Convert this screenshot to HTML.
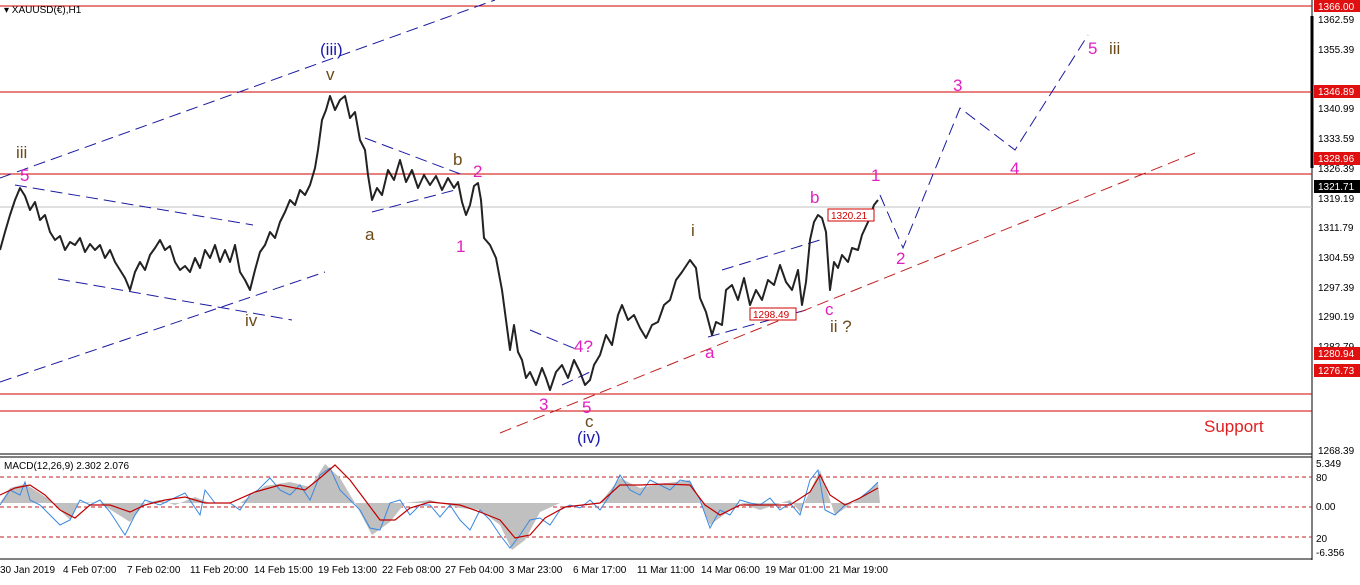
<!DOCTYPE html>
<html><head><meta charset="utf-8"><style>
body{margin:0;background:#fff;width:1360px;height:580px;overflow:hidden;font-family:"Liberation Sans",sans-serif}
svg text{font-family:"Liberation Sans",sans-serif}
</style></head><body>
<svg width="1360" height="580" viewBox="0 0 1360 580" xmlns="http://www.w3.org/2000/svg">
<rect width="1360" height="580" fill="#fff"/>
<line x1="1312" y1="0" x2="1312" y2="560" stroke="#000"/>
<line x1="0" y1="454" x2="1312" y2="454" stroke="#000" stroke-width="1"/>
<line x1="0" y1="457" x2="1312" y2="457" stroke="#000" stroke-width="1"/>
<line x1="0" y1="559" x2="1312" y2="559" stroke="#000"/>
<line x1="1312" y1="16" x2="1312" y2="168" stroke="#000" stroke-width="3"/>
<g stroke="#d00000" stroke-width="1">
<line x1="0" y1="6" x2="1312" y2="6"/>
<line x1="0" y1="92" x2="1312" y2="92"/>
<line x1="0" y1="174" x2="1312" y2="174"/>
<line x1="0" y1="394" x2="1312" y2="394"/>
<line x1="0" y1="411" x2="1312" y2="411"/>
</g>
<line x1="0" y1="207" x2="1312" y2="207" stroke="#c0c0c0"/>
<g stroke="#1a1aa0" stroke-width="1" stroke-dasharray="12,6" fill="none">
<line x1="0" y1="178" x2="495" y2="0"/>
<line x1="0" y1="382" x2="325" y2="272"/>
<line x1="15" y1="185" x2="253" y2="225"/>
<line x1="58" y1="279" x2="292" y2="320"/>
<line x1="365" y1="138" x2="463" y2="175"/>
<line x1="372" y1="212" x2="455" y2="190"/>
<line x1="530" y1="330" x2="578" y2="350"/>
<line x1="562" y1="385" x2="590" y2="372"/>
<line x1="722" y1="270" x2="820" y2="240"/>
<line x1="708" y1="337" x2="806" y2="310"/>
<polyline points="880,195 903,248 960,108 1015,150 1088,35"/>
</g>
<line x1="500" y1="433" x2="1195" y2="153" stroke="#c02020" stroke-dasharray="12,6"/>
<polyline fill="none" stroke="#222" stroke-width="2" stroke-linejoin="round" points="0,250 5,232 10,215 15,200 20,188 25,196 30,210 35,202 40,220 45,215 50,232 55,240 60,236 65,250 70,242 75,245 80,238 85,252 90,244 95,250 100,245 105,258 110,250 115,262 120,270 125,278 130,290 135,272 140,262 145,270 150,255 155,248 160,240 165,250 170,246 175,262 180,270 185,266 190,272 195,258 200,268 205,250 210,258 215,245 220,262 225,250 230,262 235,245 240,272 245,280 250,290 255,270 260,252 265,245 270,232 275,238 280,222 285,212 290,200 295,205 300,190 305,195 310,185 315,168 318,150 322,120 326,110 330,96 335,110 340,100 345,96 350,118 355,112 360,140 365,150 368,175 372,200 377,188 382,195 388,170 394,180 400,160 406,182 412,170 418,188 424,175 430,185 436,176 442,190 448,178 454,188 458,182 462,202 466,215 470,205 474,186 478,183 481,200 484,238 490,245 496,258 502,290 506,320 510,350 514,325 518,352 522,360 526,378 530,372 536,385 542,368 546,378 550,390 556,372 562,365 568,378 574,360 580,372 585,385 590,380 594,365 600,355 606,335 612,345 618,315 622,305 628,320 634,315 640,328 646,338 652,325 658,322 664,305 670,300 676,280 682,272 690,260 696,268 700,298 706,312 712,335 716,322 722,325 726,290 732,285 738,300 744,278 750,305 756,290 762,300 768,280 774,285 780,265 786,282 792,290 798,270 802,305 806,282 810,240 814,222 818,215 822,218 826,232 830,290 834,262 838,268 842,255 848,262 852,248 858,250 862,235 868,222 874,205 878,200"/>
<g font-size="17">
<text x="320" y="55" fill="#1a1ab0">(iii)</text>
<text x="577" y="443" fill="#1a1ab0">(iv)</text>
<text x="16" y="158" fill="#6b4a1a">iii</text>
<text x="326" y="80" fill="#6b4a1a">v</text>
<text x="245" y="326" fill="#6b4a1a">iv</text>
<text x="365" y="240" fill="#6b4a1a">a</text>
<text x="453" y="165" fill="#6b4a1a">b</text>
<text x="585" y="427" fill="#6b4a1a">c</text>
<text x="691" y="236" fill="#6b4a1a">i</text>
<text x="830" y="332" fill="#6b4a1a">ii ?</text>
<text x="1109" y="54" fill="#6b4a1a">iii</text>
<text x="20" y="181" fill="#e020c0">5</text>
<text x="473" y="177" fill="#e020c0">2</text>
<text x="456" y="252" fill="#e020c0">1</text>
<text x="539" y="410" fill="#e020c0">3</text>
<text x="582" y="413" fill="#e020c0">5</text>
<text x="574" y="352" fill="#e020c0">4?</text>
<text x="705" y="358" fill="#e020c0">a</text>
<text x="810" y="203" fill="#e020c0">b</text>
<text x="825" y="315" fill="#e020c0">c</text>
<text x="871" y="181" fill="#e020c0">1</text>
<text x="896" y="264" fill="#e020c0">2</text>
<text x="953" y="91" fill="#e020c0">3</text>
<text x="1010" y="174" fill="#e020c0">4</text>
<text x="1088" y="54" fill="#e020c0">5</text>
<text x="1204" y="432" fill="#e02020">Support</text>
</g>
<text x="4" y="13" font-size="10" fill="#000">▾ XAUUSD(€),H1</text>
<rect x="828" y="209" width="46" height="12" fill="#fff" stroke="#d00000"/>
<text x="831" y="219" font-size="10" fill="#d00000">1320.21</text>
<rect x="750" y="308" width="46" height="12" fill="#fff" stroke="#d00000"/>
<text x="753" y="318" font-size="10" fill="#d00000">1298.49</text>
<g font-size="10" fill="#000">
<text x="1318" y="23">1362.59</text>
<text x="1318" y="53">1355.39</text>
<text x="1318" y="112">1340.99</text>
<text x="1318" y="142">1333.59</text>
<text x="1318" y="172">1326.39</text>
<text x="1318" y="202">1319.19</text>
<text x="1318" y="231">1311.79</text>
<text x="1318" y="261">1304.59</text>
<text x="1318" y="291">1297.39</text>
<text x="1318" y="320">1290.19</text>
<text x="1318" y="350">1282.79</text>
<text x="1318" y="454">1268.39</text>
<text x="1316" y="467">5.349</text>
<text x="1316" y="481">80</text>
<text x="1316" y="510">0.00</text>
<text x="1316" y="542">20</text>
<text x="1316" y="556">-6.356</text>
</g>
<g font-size="10" fill="#fff">
<rect x="1314" y="0" width="46" height="12" fill="#e01010"/><text x="1318" y="10">1366.00</text>
<rect x="1314" y="85" width="46" height="13" fill="#e01010"/><text x="1318" y="95">1346.89</text>
<rect x="1314" y="152" width="46" height="13" fill="#e01010"/><text x="1318" y="162">1328.96</text>
<rect x="1314" y="180" width="46" height="13" fill="#000"/><text x="1318" y="190">1321.71</text>
<rect x="1314" y="347" width="46" height="13" fill="#e01010"/><text x="1318" y="357">1280.94</text>
<rect x="1314" y="364" width="46" height="13" fill="#e01010"/><text x="1318" y="374">1276.73</text>
</g>
<g stroke="#c02020" stroke-dasharray="4,3"><line x1="0" y1="477" x2="1312" y2="477"/><line x1="0" y1="507" x2="1312" y2="507"/><line x1="0" y1="537" x2="1312" y2="537"/></g>
<polygon fill="#c0c0c0" points="0,503 10,488 25,484 35,490 50,500 62,512 70,520 80,502 100,503 130,522 145,503 160,500 175,505 195,497 210,503 240,503 265,486 290,482 310,487 325,464 340,478 355,503 372,535 390,522 405,503 430,500 460,508 480,510 500,525 512,550 525,540 540,512 560,503 600,503 620,478 640,488 660,484 690,480 710,525 740,503 760,510 790,500 800,512 820,470 835,515 860,498 878,482 880,503"/>
<polyline fill="none" stroke="#3a88e0" stroke-width="1" points="0,505 10,490 20,495 25,482 30,500 40,505 50,515 60,525 70,520 80,500 90,505 100,500 110,512 125,535 135,515 145,500 160,505 170,500 185,493 200,515 205,490 215,503 230,503 240,510 250,495 258,490 270,478 280,490 290,495 300,485 310,500 320,475 330,468 340,490 350,500 360,510 370,528 380,530 390,503 400,500 410,515 420,505 430,505 440,517 450,505 460,520 470,530 480,510 490,520 500,535 510,548 520,535 530,520 540,518 550,525 560,510 570,505 580,508 590,500 600,510 610,495 620,475 630,490 640,495 650,480 660,485 670,490 680,480 690,482 700,500 710,528 720,510 730,515 740,500 750,503 760,505 770,498 780,510 790,503 800,515 810,480 818,470 825,510 835,515 845,505 860,498 870,490 878,482"/>
<polyline fill="none" stroke="#c00000" stroke-width="1.2" points="0,495 15,488 30,485 45,495 60,510 75,518 90,505 110,505 130,512 145,505 165,500 185,497 205,503 230,503 255,492 280,485 305,490 320,478 335,465 350,480 365,500 380,520 395,520 410,508 430,502 460,505 480,512 500,520 515,538 530,535 545,518 565,507 600,503 620,485 640,485 665,484 690,485 705,505 720,515 740,505 760,505 790,505 810,492 820,475 830,495 845,505 860,498 878,488"/>
<text x="4" y="469" font-size="10" fill="#000">MACD(12,26,9) 2.302 2.076</text>
<g font-size="10" fill="#000">
<text x="0" y="573">30 Jan 2019</text>
<text x="63" y="573">4 Feb 07:00</text>
<text x="127" y="573">7 Feb 02:00</text>
<text x="190" y="573">11 Feb 20:00</text>
<text x="254" y="573">14 Feb 15:00</text>
<text x="318" y="573">19 Feb 13:00</text>
<text x="382" y="573">22 Feb 08:00</text>
<text x="445" y="573">27 Feb 04:00</text>
<text x="509" y="573">3 Mar 23:00</text>
<text x="573" y="573">6 Mar 17:00</text>
<text x="637" y="573">11 Mar 11:00</text>
<text x="701" y="573">14 Mar 06:00</text>
<text x="765" y="573">19 Mar 01:00</text>
<text x="829" y="573">21 Mar 19:00</text>
</g>
</svg>
</body></html>
